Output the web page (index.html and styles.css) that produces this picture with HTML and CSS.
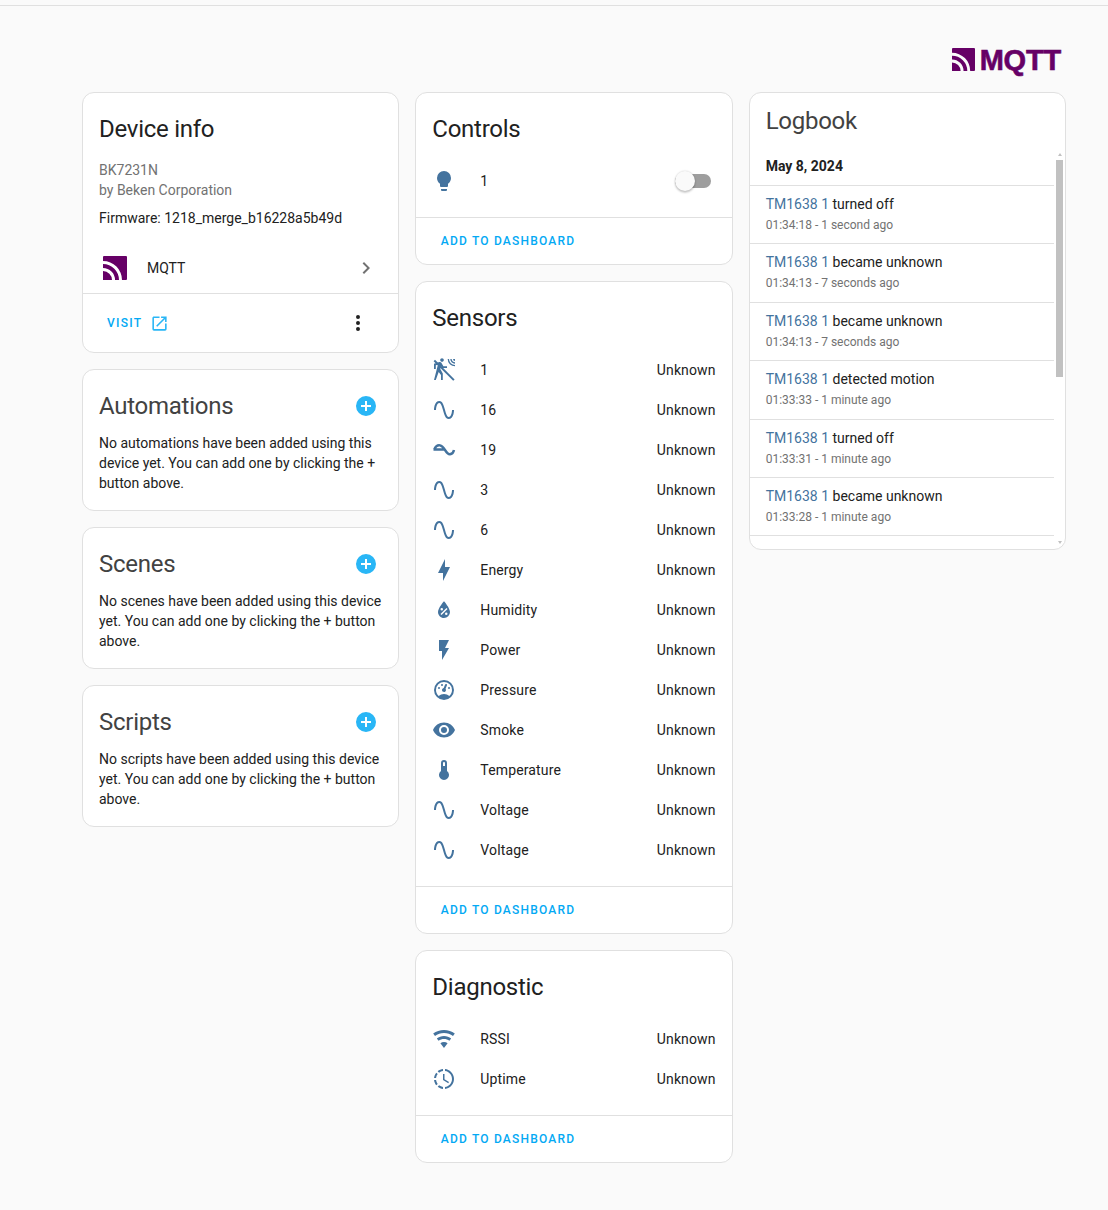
FILE: index.html
```html
<!DOCTYPE html>
<html lang="en">
<head>
<meta charset="utf-8">
<title>Device</title>
<link rel="stylesheet" href="styles.css">
</head>
<body>
<svg class="defs" width="0" height="0" aria-hidden="true">
  <symbol id="i-mqtt" viewBox="0 0 24 24"><path d="M0 15A9 9 0 0 1 9 24H0ZM0 8A16 16 0 0 1 16 24H12A12 12 0 0 0 0 12ZM1 0H23A1 1 0 0 1 24 1V23A1 1 0 0 1 23 24H19A19 19 0 0 0 0 5V1A1 1 0 0 1 1 0Z"/></symbol>
  <symbol id="i-sine" viewBox="0 0 24 24"><path d="M16.5,21C13.5,21 12.31,16.76 11.05,12.28C10.14,9.04 9,5 7.5,5C4.11,5 4,11.93 4,12H2C2,11.63 2.06,3 7.5,3C10.5,3 11.71,7.25 12.97,11.74C13.83,14.8 15,19 16.5,19C19.94,19 20.03,12.07 20.03,12H22.03C22.03,12.37 21.97,21 16.5,21Z"/></symbol>
  <symbol id="i-plus" viewBox="0 0 24 24"><path d="M17,13H13V17H11V13H7V11H11V7H13V11H17M12,2A10,10 0 0,0 2,12A10,10 0 0,0 12,22A10,10 0 0,0 22,12A10,10 0 0,0 12,2Z"/></symbol>
</svg>
<div class="topbar"></div>
<header class="brand">
  <div class="brand-logo">
    <svg class="brand-mark" viewBox="0 0 24 24"><use href="#i-mqtt"/></svg>
    <span class="brand-name">MQTT</span>
  </div>
</header>
<main class="columns">
  <section class="column">
    <article class="card">
      <h2 class="title">Device info</h2>
      <div class="info">
        <div class="muted">BK7231N</div>
        <div class="muted">by Beken Corporation</div>
        <div class="firmware">Firmware: 1218_merge_b16228a5b49d</div>
      </div>
      <div class="integration">
        <svg class="icon mqtt-icon" viewBox="0 0 24 24"><use href="#i-mqtt"/></svg>
        <span class="integration-name">MQTT</span>
        <svg class="icon chevron" viewBox="0 0 24 24"><path d="M8.59,16.58L13.17,12L8.59,7.41L10,6L16,12L10,18L8.59,16.58Z"/></svg>
      </div>
      <div class="device-actions">
        <span class="visit">VISIT</span>
        <svg class="open-icon" viewBox="0 0 24 24"><path d="M14,3V5H17.59L7.76,14.83L9.17,16.24L19,6.41V10H21V3M19,19H5V5H12V3H5C3.89,3 3,3.9 3,5V19A2,2 0 0,0 5,21H19A2,2 0 0,0 21,19V12H19V19Z"/></svg>
        <svg class="icon dots" viewBox="0 0 24 24"><path d="M12,16A2,2 0 0,1 14,18A2,2 0 0,1 12,20A2,2 0 0,1 10,18A2,2 0 0,1 12,16M12,10A2,2 0 0,1 14,12A2,2 0 0,1 12,14A2,2 0 0,1 10,12A2,2 0 0,1 12,10M12,4A2,2 0 0,1 14,6A2,2 0 0,1 12,8A2,2 0 0,1 10,6A2,2 0 0,1 12,4Z"/></svg>
      </div>
    </article>
    <article class="card">
      <div class="title-row"><h2 class="title soft">Automations</h2><svg class="icon plus" viewBox="0 0 24 24"><use href="#i-plus"/></svg></div>
      <p class="empty">No automations have been added using this device yet. You can add one by clicking the + button above.</p>
    </article>
    <article class="card">
      <div class="title-row"><h2 class="title soft">Scenes</h2><svg class="icon plus" viewBox="0 0 24 24"><use href="#i-plus"/></svg></div>
      <p class="empty">No scenes have been added using this device yet. You can add one by clicking the + button above.</p>
    </article>
    <article class="card">
      <div class="title-row"><h2 class="title soft">Scripts</h2><svg class="icon plus" viewBox="0 0 24 24"><use href="#i-plus"/></svg></div>
      <p class="empty">No scripts have been added using this device yet. You can add one by clicking the + button above.</p>
    </article>
  </section>

  <section class="column">
    <article class="card">
      <h2 class="title">Controls</h2>
      <div class="rows">
        <div class="row">
          <svg class="icon state" viewBox="0 0 24 24"><path d="M12,2A7,7 0 0,0 5,9C5,11.38 6.19,13.47 8,14.74V17A1,1 0 0,0 9,18H15A1,1 0 0,0 16,17V14.74C17.81,13.47 19,11.38 19,9A7,7 0 0,0 12,2M9,21A1,1 0 0,0 10,22H14A1,1 0 0,0 15,21V20H9V21Z"/></svg>
          <span class="name">1</span>
          <span class="switch"><span class="knob"></span></span>
        </div>
      </div>
      <div class="card-actions"><span class="add">ADD TO DASHBOARD</span></div>
    </article>
    <article class="card">
      <h2 class="title">Sensors</h2>
      <div class="rows">
        <div class="row">
          <svg class="icon state" viewBox="0 0 24 24"><path d="M10,0.2C9,0.2 8.2,1 8.2,2C8.2,3 9,3.8 10,3.8C11,3.8 11.8,3 11.8,2C11.8,1 11,0.2 10,0.2M15.67,1A7.33,7.33 0 0,0 23,8.33V7A6,6 0 0,1 17,1H15.67M18.33,1C18.33,3.58 20.42,5.67 23,5.67V4.33C21.16,4.33 19.67,2.84 19.67,1H18.33M21,1A2,2 0 0,0 23,3V1H21M7.92,4.03C7.75,4.03 7.58,4.06 7.42,4.11L2,5.8V11H3.8V7.33L5.91,6.67L2,22H3.8L6.67,13.89L9,17V22H10.8V15.59L8.31,11.05L9.04,8.18L10.12,10H15V8.2H11.38L9.38,4.87C9.08,4.37 8.54,4.03 7.92,4.03Z"/><path d="M1.6,3.2L3,1.8L22.6,21.4L21.2,22.8Z"/></svg>
          <span class="name">1</span><span class="value">Unknown</span>
        </div>
        <div class="row"><svg class="icon state" viewBox="0 0 24 24"><use href="#i-sine"/></svg><span class="name">16</span><span class="value">Unknown</span></div>
        <div class="row">
          <svg class="icon state" viewBox="0 0 24 24"><path class="wave" d="M1.5,11.5H13M2.2,11.5C3.8,8 6,7 8,7.4C10,7.8 11.6,9.8 13,12C14.6,14.6 16,16.4 18,16.2C20,16 21.6,14 22,12"/></svg>
          <span class="name">19</span><span class="value">Unknown</span>
        </div>
        <div class="row"><svg class="icon state" viewBox="0 0 24 24"><use href="#i-sine"/></svg><span class="name">3</span><span class="value">Unknown</span></div>
        <div class="row"><svg class="icon state" viewBox="0 0 24 24"><use href="#i-sine"/></svg><span class="name">6</span><span class="value">Unknown</span></div>
        <div class="row"><svg class="icon state" viewBox="0 0 24 24"><path d="M11 15H6L13 1V9H18L11 23V15Z"/></svg><span class="name">Energy</span><span class="value">Unknown</span></div>
        <div class="row"><svg class="icon state" viewBox="0 0 24 24"><path fill-rule="evenodd" d="M12,3.25C12,3.25 6,10 6,14C6,17.32 8.69,20 12,20A6,6 0 0,0 18,14C18,10 12,3.25 12,3.25M14.47,9.97L15.53,11.03L9.53,17.03L8.47,15.97M9.75,10A1.25,1.25 0 0,1 11,11.25A1.25,1.25 0 0,1 9.75,12.5A1.25,1.25 0 0,1 8.5,11.25A1.25,1.25 0 0,1 9.75,10M14.25,14.5A1.25,1.25 0 0,1 15.5,15.75A1.25,1.25 0 0,1 14.25,17A1.25,1.25 0 0,1 13,15.75A1.25,1.25 0 0,1 14.25,14.5Z"/></svg><span class="name">Humidity</span><span class="value">Unknown</span></div>
        <div class="row"><svg class="icon state" viewBox="0 0 24 24"><path d="M7,2V13H10V22L17,10H13L17,2H7Z"/></svg><span class="name">Power</span><span class="value">Unknown</span></div>
        <div class="row"><svg class="icon state" viewBox="0 0 24 24"><path d="M12,2A10,10 0 0,0 2,12A10,10 0 0,0 12,22A10,10 0 0,0 22,12A10,10 0 0,0 12,2M12,4A8,8 0 0,1 20,12C20,14.4 19,16.5 17.3,18C15.9,16.7 14,16 12,16C10,16 8.2,16.7 6.7,18C5,16.5 4,14.4 4,12A8,8 0 0,1 12,4M14,5.89C13.62,5.9 13.26,6.15 13.1,6.54L11.81,9.77L11.71,10C11,10.13 10.41,10.6 10.14,11.26C9.73,12.29 10.23,13.45 11.26,13.86C12.29,14.27 13.45,13.77 13.86,12.74C14.12,12.08 14,11.32 13.57,10.76L13.67,10.5L14.96,7.29L14.97,7.26C15.17,6.75 14.92,6.17 14.41,5.96C14.28,5.91 14.15,5.89 14,5.89M10,6A1,1 0 0,0 9,7A1,1 0 0,0 10,8A1,1 0 0,0 11,7A1,1 0 0,0 10,6M7,9A1,1 0 0,0 6,10A1,1 0 0,0 7,11A1,1 0 0,0 8,10A1,1 0 0,0 7,9M17,9A1,1 0 0,0 16,10A1,1 0 0,0 17,11A1,1 0 0,0 18,10A1,1 0 0,0 17,9Z"/></svg><span class="name">Pressure</span><span class="value">Unknown</span></div>
        <div class="row"><svg class="icon state" viewBox="0 0 24 24"><path d="M12,9A3,3 0 0,0 9,12A3,3 0 0,0 12,15A3,3 0 0,0 15,12A3,3 0 0,0 12,9M12,17A5,5 0 0,1 7,12A5,5 0 0,1 12,7A5,5 0 0,1 17,12A5,5 0 0,1 12,17M12,4.5C7,4.5 2.73,7.61 1,12C2.73,16.39 7,19.5 12,19.5C17,19.5 21.27,16.39 23,12C21.27,7.61 17,4.5 12,4.5Z"/></svg><span class="name">Smoke</span><span class="value">Unknown</span></div>
        <div class="row"><svg class="icon state" viewBox="0 0 24 24"><path d="M15 13V5A3 3 0 0 0 9 5V13A5 5 0 1 0 15 13M12 4A1 1 0 0 1 13 5V8H11V5A1 1 0 0 1 12 4Z"/></svg><span class="name">Temperature</span><span class="value">Unknown</span></div>
        <div class="row"><svg class="icon state" viewBox="0 0 24 24"><use href="#i-sine"/></svg><span class="name">Voltage</span><span class="value">Unknown</span></div>
        <div class="row"><svg class="icon state" viewBox="0 0 24 24"><use href="#i-sine"/></svg><span class="name">Voltage</span><span class="value">Unknown</span></div>
      </div>
      <div class="card-actions"><span class="add">ADD TO DASHBOARD</span></div>
    </article>
    <article class="card">
      <h2 class="title">Diagnostic</h2>
      <div class="rows">
        <div class="row"><svg class="icon state" viewBox="0 0 24 24"><path d="M12,21L15.6,16.2C14.6,15.45 13.35,15 12,15C10.65,15 9.4,15.45 8.4,16.2L12,21M12,3C7.95,3 4.21,4.34 1.2,6.6L3,9C5.5,7.12 8.62,6 12,6C15.38,6 18.5,7.12 21,9L22.8,6.6C19.79,4.34 16.05,3 12,3M12,9C9.3,9 6.81,9.89 4.8,11.4L6.6,13.8C8.1,12.67 9.97,12 12,12C14.03,12 15.9,12.67 17.4,13.8L19.2,11.4C17.19,9.89 14.7,9 12,9Z"/></svg><span class="name">RSSI</span><span class="value">Unknown</span></div>
        <div class="row"><svg class="icon state" viewBox="0 0 24 24"><path d="M13,2.03V2.05L13,4.05C17.39,4.59 20.5,8.58 19.96,12.97C19.5,16.61 16.64,19.5 13,19.93V21.93C18.5,21.38 22.5,16.5 21.95,11C21.5,6.25 17.73,2.5 13,2.03M11,2.06C9.05,2.25 7.19,3 5.67,4.26L7.1,5.74C8.22,4.84 9.57,4.26 11,4.06V2.06M4.26,5.67C3,7.19 2.25,9.04 2.05,11H4.05C4.24,9.58 4.8,8.23 5.69,7.1L4.26,5.67M2.06,13C2.26,14.96 3.03,16.81 4.27,18.33L5.69,16.9C4.81,15.77 4.24,14.42 4.06,13H2.06M7.1,18.37L5.67,19.74C7.18,21 9.04,21.79 11,22V20C9.58,19.82 8.23,19.25 7.1,18.37M12.5,7V12.25L17,14.92L16.25,16.15L11,13V7H12.5Z"/></svg><span class="name">Uptime</span><span class="value">Unknown</span></div>
      </div>
      <div class="card-actions"><span class="add">ADD TO DASHBOARD</span></div>
    </article>
  </section>

  <section class="column">
    <article class="card logbook">
      <h2 class="title soft logbook-title">Logbook</h2>
      <div class="log-scroll">
        <div class="log-date">May 8, 2024</div>
        <div class="log-entry"><div class="log-line"><span class="log-link">TM1638 1</span> turned off</div><div class="log-time">01:34:18 - 1 second ago</div></div>
        <div class="log-entry"><div class="log-line"><span class="log-link">TM1638 1</span> became unknown</div><div class="log-time">01:34:13 - 7 seconds ago</div></div>
        <div class="log-entry"><div class="log-line"><span class="log-link">TM1638 1</span> became unknown</div><div class="log-time">01:34:13 - 7 seconds ago</div></div>
        <div class="log-entry"><div class="log-line"><span class="log-link">TM1638 1</span> detected motion</div><div class="log-time">01:33:33 - 1 minute ago</div></div>
        <div class="log-entry"><div class="log-line"><span class="log-link">TM1638 1</span> turned off</div><div class="log-time">01:33:31 - 1 minute ago</div></div>
        <div class="log-entry"><div class="log-line"><span class="log-link">TM1638 1</span> became unknown</div><div class="log-time">01:33:28 - 1 minute ago</div></div>
        <div class="log-entry log-entry-peek"><div class="log-line"><span class="log-link">TM1638 1</span> became unknown</div><div class="log-time">01:33:28 - 1 minute ago</div></div>
      </div>
      <span class="sb-arrow sb-up"></span>
      <span class="sb-thumb"></span>
      <span class="sb-arrow sb-down"></span>
    </article>
  </section>
</main>
</body>
</html>
```
FILE: styles.css
```css
* { box-sizing: border-box; }
html, body { margin: 0; padding: 0; }
body {
  background: #fafafa;
  color: #212121;
  font-family: Roboto, "Liberation Sans", sans-serif;
  font-size: 14px;
  line-height: 20px;
}
.defs { position: absolute; }
.topbar { height: 6px; border-bottom: 1px solid #e0e0e0; }
.brand {
  display: flex;
  justify-content: flex-end;
  height: 86px;
  padding: 40px 47px 0 0;
}
.brand-logo { display: flex; align-items: flex-start; height: 30px; color: #660066; }
.brand-mark { width: 23px; height: 23px; margin-top: 2px; fill: #660066; }
.brand-name {
  margin-left: 5px;
  font-family: "Liberation Sans", sans-serif;
  font-size: 29px;
  font-weight: 700;
  line-height: 28px;
  letter-spacing: -0.2px;
  -webkit-text-stroke: 0.6px #660066;
}
.columns {
  display: grid;
  grid-template-columns: repeat(3, 1fr);
  gap: 16px;
  align-items: start;
  padding: 0 42px 47px 82px;
}
.column { display: flex; flex-direction: column; gap: 16px; min-width: 0; }
.card {
  position: relative;
  background: #fff;
  border: 1px solid #e0e0e0;
  border-radius: 12px;
  overflow: hidden;
}
.title {
  margin: 0;
  padding: 20px 16px 0;
  font-size: 24px;
  font-weight: 400;
  line-height: 32px;
  letter-spacing: -0.26px;
}
.soft { color: #424242; }
.title-row { display: flex; align-items: center; justify-content: space-between; }
.icon { display: block; flex: none; width: 24px; height: 24px; fill: currentColor; }
.plus { margin: 20px 20px 0 0; color: #29b6f6; }
.empty { margin: 11px 0 17px; padding: 0 16px; }

.info { padding: 15px 16px 0; }
.muted { color: #727272; }
.firmware { margin-top: 8px; }
.integration {
  display: flex;
  align-items: center;
  height: 48px;
  margin-top: 16px;
  padding: 0 20px;
}
.mqtt-icon { fill: #660066; }
.integration-name { flex: 1; margin-left: 20px; }
.chevron { color: #727272; }
.device-actions {
  display: flex;
  align-items: center;
  height: 59px;
  margin-top: 1px;
  padding: 0 28px 0 24px;
  border-top: 1px solid #e0e0e0;
}
.visit { color: #03a9f4; font-size: 12px; font-weight: 500; letter-spacing: 1.25px; }
.open-icon { width: 19px; height: 19px; margin-left: 8px; fill: #29b6f6; }
.dots { margin-left: auto; }

.rows { padding: 16px; letter-spacing: 0.14px; }
.row { display: flex; align-items: center; height: 40px; }
.state { color: #44739e; }
.wave { fill: none; stroke: currentColor; stroke-width: 2.4; }
.name { flex: 1; margin-left: 24px; }
.value { color: #212121; }
.switch {
  position: relative;
  width: 36px;
  height: 14px;
  margin-right: 5px;
  border-radius: 7px;
  background: #9e9e9e;
}
.knob {
  position: absolute;
  top: -3px;
  left: 0;
  width: 20px;
  height: 20px;
  border-radius: 50%;
  background: #fafafa;
  box-shadow: 0 2px 2px rgba(0, 0, 0, .18), 0 0 2px rgba(0, 0, 0, .2);
}
.card-actions {
  display: flex;
  align-items: center;
  height: 47px;
  padding-left: 24.5px;
  border-top: 1px solid #e0e0e0;
}
.add { color: #03a9f4; font-size: 12px; font-weight: 500; letter-spacing: 1.2px; }

.logbook-title { padding-top: 12px; }
.log-scroll { height: 397px; margin-top: 15px; overflow: hidden; margin-right: 11px; }
.log-date {
  height: 34px;
  padding: 4px 16px 0;
  font-weight: 700;
  border-bottom: 1px solid #e0e0e0;
}
.log-entry { height: 58.4px; padding: 8px 16px 0; border-bottom: 1px solid #e0e0e0; }
.log-entry-peek { padding-top: 9px; }
.log-link { color: #44739e; }
.log-time { margin-top: 1px; color: #727272; font-size: 12px; }
.sb-thumb {
  position: absolute;
  top: 67px;
  right: 2px;
  width: 7px;
  height: 217px;
  background: #c1c1c1;
}
.sb-arrow {
  position: absolute;
  right: 3px;
  width: 0;
  height: 0;
  border-left: 2.5px solid transparent;
  border-right: 2.5px solid transparent;
}
.sb-up { top: 60px; border-bottom: 3px solid #c1c1c1; }
.sb-down { bottom: 5px; border-top: 3px solid #c1c1c1; }
```
